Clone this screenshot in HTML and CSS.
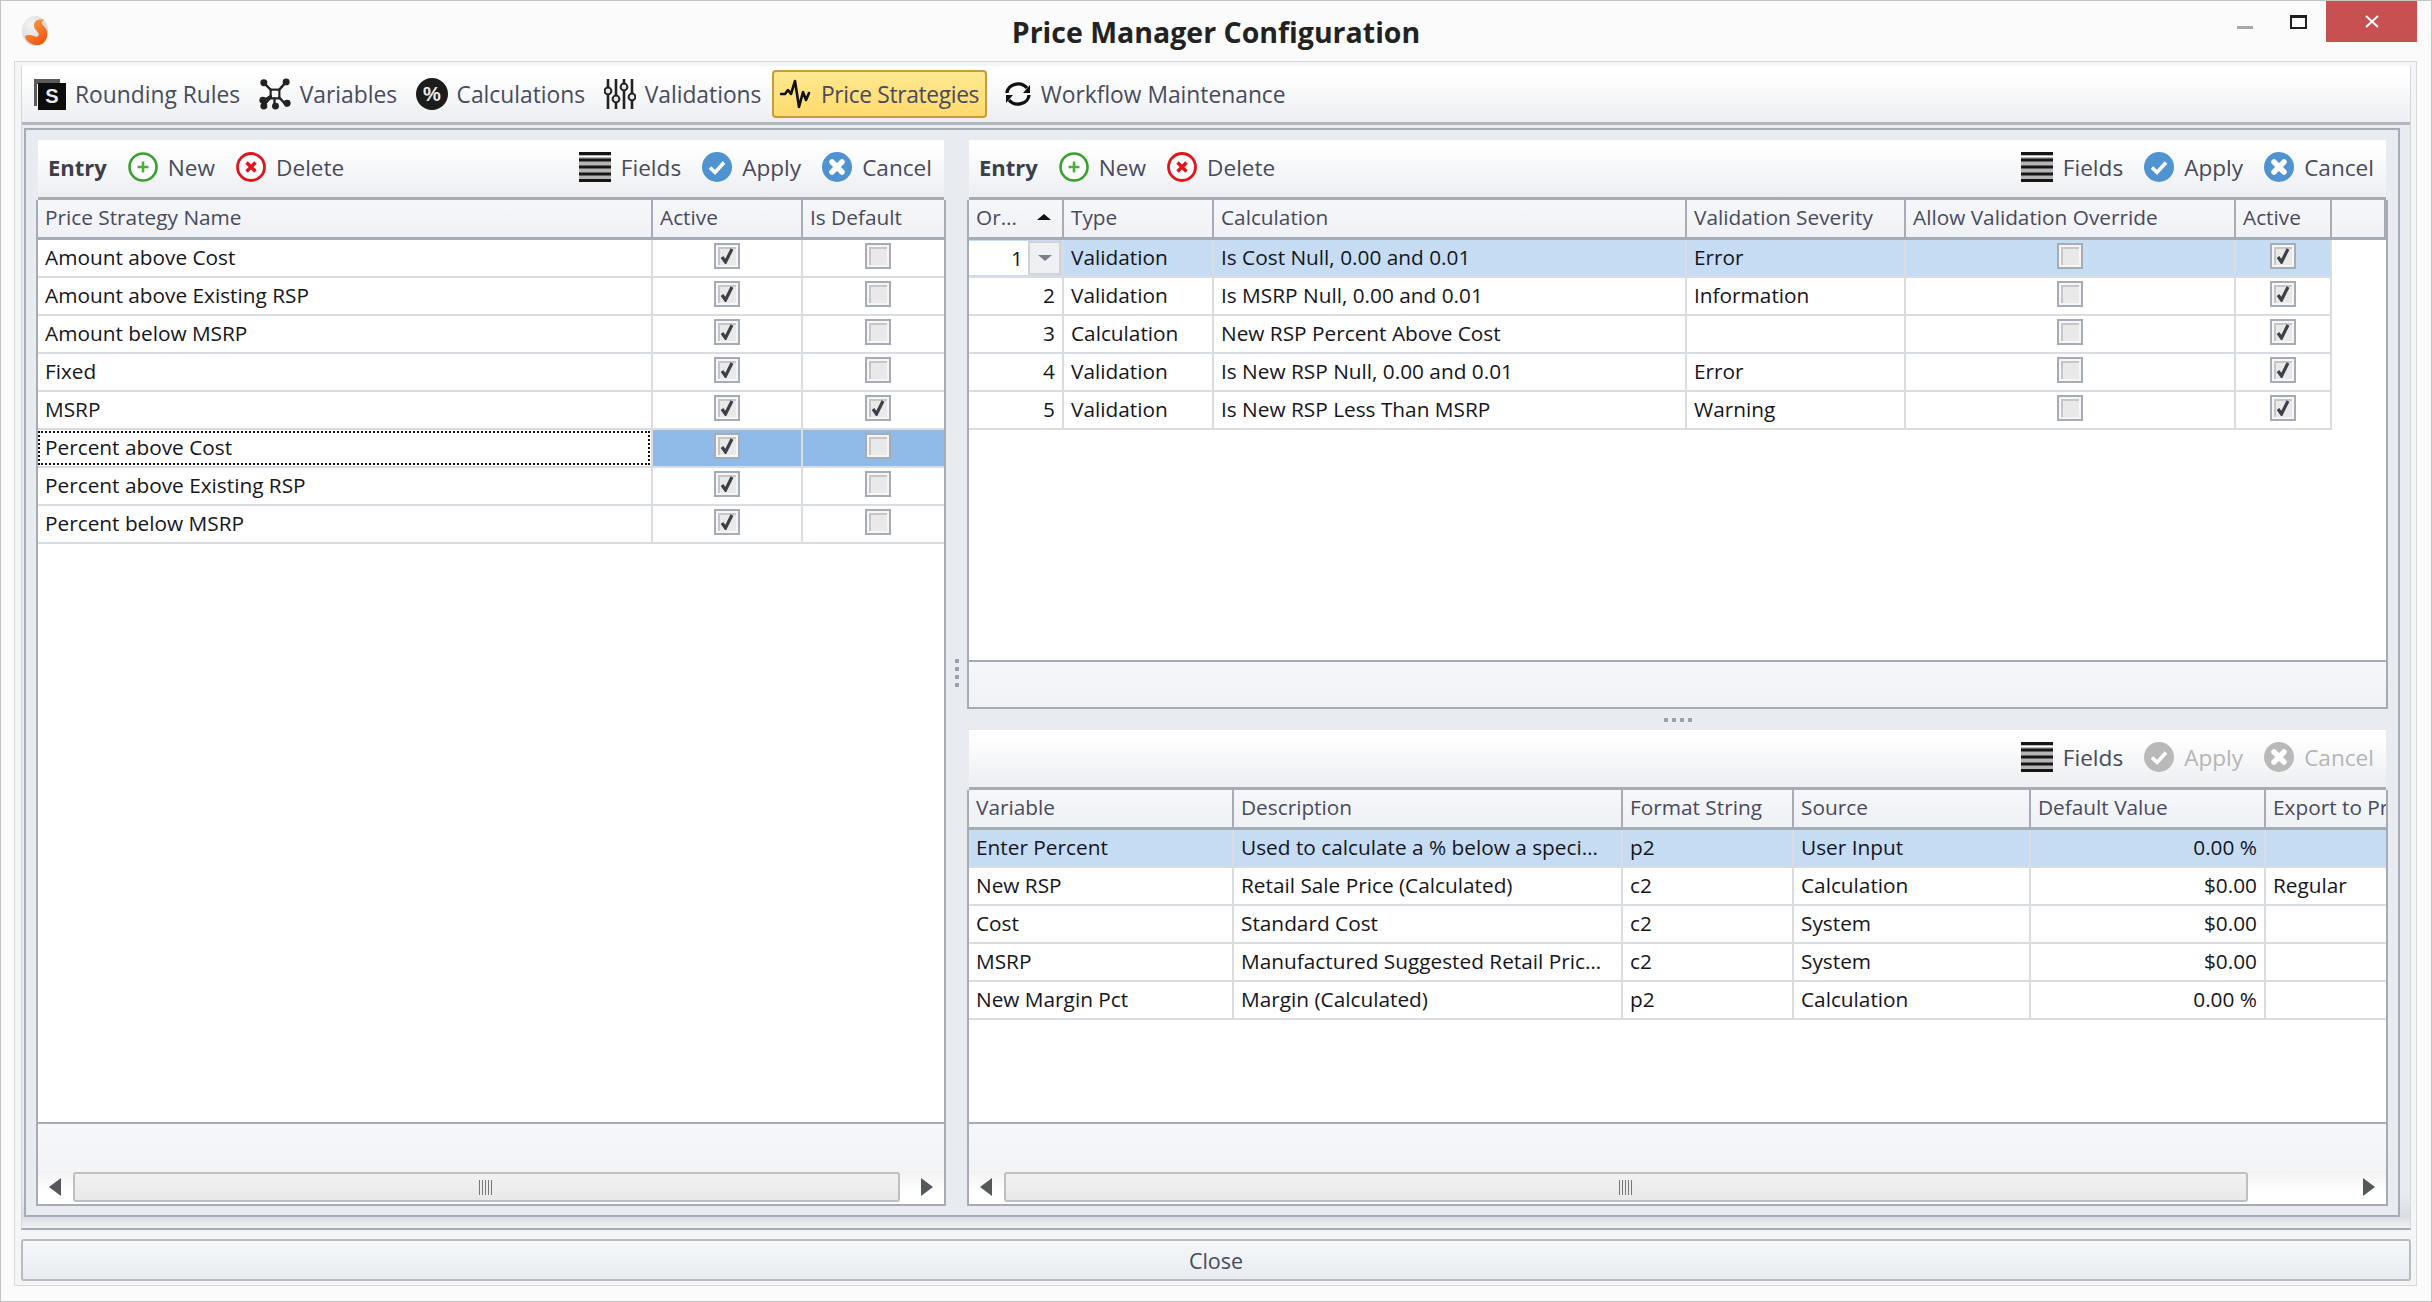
FILE: index.html
```html
<!DOCTYPE html>
<html lang="en">
<head>
    <meta charset="UTF-8">
    <title>Price Manager Configuration</title>
    <link rel="stylesheet" href="styles.css">
</head>
<body>
    <!-- Icon sprite -->
    <svg class="sprite" xmlns="http://www.w3.org/2000/svg">
        <defs>
            <radialGradient id="logo-ball" cx="35%" cy="30%" r="80%">
                <stop offset="0" stop-color="#f4f4f4"/>
                <stop offset="1" stop-color="#cfcfcf"/>
            </radialGradient>
            <linearGradient id="logo-flame" x1="0" y1="0" x2="0.6" y2="1">
                <stop offset="0" stop-color="#f9a04d"/>
                <stop offset="1" stop-color="#ee5a14"/>
            </linearGradient>
        </defs>
        <symbol id="i-logo" viewBox="0 0 32 34">
            <ellipse cx="16" cy="17" rx="14" ry="16" fill="url(#logo-ball)"/>
            <path d="M26 5c-7-1-11 1-11 6 0 5 5 6 5 10 0 2-3 3-6 1-3-1-6-1-9 1 3 6 8 9 14 9 6 0 10-5 10-12 0-6-4-8-6-11 0-2 1-3 3-4z" fill="url(#logo-flame)"/>
        </symbol>
        <symbol id="i-variables" viewBox="0 0 33 33">
            <g stroke="#222" stroke-width="2.4" fill="none">
                <path d="M5 5l8 8M28 4l-8 9M5 23l8-5M4 29l9-10M16 29l0-9M29 29l-9-10"/>
                <rect x="12" y="12" width="9" height="9" stroke-width="2.2"/>
            </g>
            <g fill="#222">
                <circle cx="5" cy="5" r="3.6"/>
                <circle cx="28" cy="4" r="3.6"/>
                <circle cx="4" cy="23" r="3.6"/>
                <circle cx="5" cy="29" r="3.6"/>
                <circle cx="17" cy="29" r="3.6"/>
                <circle cx="29" cy="26" r="3.6"/>
            </g>
        </symbol>
        <symbol id="i-validations" viewBox="0 0 32 32">
            <g stroke="#222" stroke-width="2.6" fill="none">
                <path d="M4 1v30M12 1v30M20 1v30M28 1v30"/>
            </g>
            <g fill="#e8e8e8" stroke="#222" stroke-width="2">
                <circle cx="4" cy="13" r="3.4"/>
                <circle cx="12" cy="21" r="3.4"/>
                <circle cx="20" cy="9" r="3.4"/>
                <circle cx="28" cy="19" r="3.4"/>
            </g>
        </symbol>
        <symbol id="i-wave" viewBox="0 0 32 32">
            <path d="M1 16h4l3-4 3 4 4-13 4 26 4-15 3 8 3-7" fill="none" stroke="#111" stroke-width="2.6" stroke-linejoin="round" stroke-linecap="round"/>
        </symbol>
        <symbol id="i-refresh" viewBox="0 0 28 24">
            <path d="M3 11A11 9.500 0 0 1 23 6" fill="none" stroke="#111" stroke-width="3.400"/>
            <path d="M25 13A11 9.500 0 0 1 5 18" fill="none" stroke="#111" stroke-width="3.400"/>
            <path d="M26 3v8h-7z" fill="#111"/>
            <path d="M2 21v-8h7z" fill="#111"/>
        </symbol>
        <symbol id="i-new" viewBox="0 0 30 30">
            <circle cx="15" cy="15" r="13.500" fill="#fff" stroke="#3aa02f" stroke-width="2.6"/>
            <path d="M15 9.500v11M9.500 15h11" stroke="#4aae3c" stroke-width="2.6"/>
        </symbol>
        <symbol id="i-delete" viewBox="0 0 30 30">
            <circle cx="15" cy="15" r="13.500" fill="#fff" stroke="#e2141c" stroke-width="2.8"/>
            <path d="M10.500 10.500l9 9M19.500 10.500l-9 9" stroke="#e2141c" stroke-width="3.400"/>
        </symbol>
        <symbol id="i-fields" viewBox="0 0 32 30">
            <rect width="32" height="30" fill="#b5b5b5"/>
            <path d="M0 1.500h32M0 8h32M0 15h32M0 22h32M0 28.500h32" stroke="#161616" stroke-width="3"/>
            <path d="M0 4.500h32" stroke="#fff" stroke-width="1"/>
        </symbol>
        <symbol id="i-apply" viewBox="0 0 30 30">
            <circle cx="15" cy="15" r="15" fill="currentColor"/>
            <path d="M8 15.500l5 5 9-10" fill="none" stroke="#fff" stroke-width="3.600"/>
        </symbol>
        <symbol id="i-cancel" viewBox="0 0 30 30">
            <circle cx="15" cy="15" r="15" fill="currentColor"/>
            <path d="M10 10l10 10M20 10L10 20" stroke="#fff" stroke-width="5.500" stroke-linecap="round"/>
        </symbol>
        <symbol id="i-check" viewBox="0 0 14 16">
            <path d="M2 9l3.500 5L12 1" fill="none" stroke="#3d4048" stroke-width="3.200"/>
        </symbol>
    </svg>

    <div class="window">
        <header class="titlebar">
            <svg class="logo"><use href="#i-logo"/></svg>
            <h1 class="title">Price Manager Configuration</h1>
            <div class="window-controls">
                <span class="win-min"></span>
                <span class="win-max"></span>
                <span class="win-close">
                    <svg viewBox="0 0 14 13"><path d="M1 1l12 11M13 1L1 12" stroke="#fff" stroke-width="2"/></svg>
                </span>
            </div>
        </header>

        <div class="shell">
            <div class="tabpage">
                <nav class="tabs">
                    <div class="tab">
                        <svg class="tab-icon" viewBox="0 0 32 32">
                            <path d="M0 1h26v5H3v22H0z" fill="#5a5a5a"/>
                            <rect x="4" y="5" width="28" height="27" fill="#0c0c0c"/>
                            <text x="18" y="25" class="icon-letter">S</text>
                        </svg>
                        Rounding Rules
                    </div>
                    <div class="tab"><svg class="tab-icon"><use href="#i-variables"/></svg>Variables</div>
                    <div class="tab">
                        <svg class="tab-icon" viewBox="0 0 32 32">
                            <circle cx="16" cy="16" r="16" fill="#1c1c1c"/>
                            <text x="16" y="23" class="icon-percent">%</text>
                        </svg>
                        Calculations
                    </div>
                    <div class="tab"><svg class="tab-icon"><use href="#i-validations"/></svg>Validations</div>
                    <div class="tab active"><svg class="tab-icon"><use href="#i-wave"/></svg>Price Strategies</div>
                    <div class="tab"><svg class="tab-icon refresh"><use href="#i-refresh"/></svg>Workflow Maintenance</div>
                </nav>

                <div class="content">
                    <!-- Strategies list -->
                    <section class="pane">
                        <div class="toolbar">
                            <span class="entry">Entry</span>
                            <span class="tool"><svg class="ico"><use href="#i-new"/></svg>New</span>
                            <span class="tool"><svg class="ico"><use href="#i-delete"/></svg>Delete</span>
                            <span class="tool push"><svg class="ico fields"><use href="#i-fields"/></svg>Fields</span>
                            <span class="tool"><svg class="ico"><use href="#i-apply"/></svg>Apply</span>
                            <span class="tool"><svg class="ico"><use href="#i-cancel"/></svg>Cancel</span>
                        </div>
                        <div class="grid-body">
                            <table class="grid strategies">
                                <thead>
                                    <tr><th>Price Strategy Name</th><th>Active</th><th>Is Default</th></tr>
                                </thead>
                                <tbody>
                                    <tr><td>Amount above Cost</td><td class="c"><span class="check"><svg><use href="#i-check"/></svg></span></td><td class="c"><span class="check"></span></td></tr>
                                    <tr><td>Amount above Existing RSP</td><td class="c"><span class="check"><svg><use href="#i-check"/></svg></span></td><td class="c"><span class="check"></span></td></tr>
                                    <tr><td>Amount below MSRP</td><td class="c"><span class="check"><svg><use href="#i-check"/></svg></span></td><td class="c"><span class="check"></span></td></tr>
                                    <tr><td>Fixed</td><td class="c"><span class="check"><svg><use href="#i-check"/></svg></span></td><td class="c"><span class="check"></span></td></tr>
                                    <tr><td>MSRP</td><td class="c"><span class="check"><svg><use href="#i-check"/></svg></span></td><td class="c"><span class="check"><svg><use href="#i-check"/></svg></span></td></tr>
                                    <tr class="picked"><td class="focused"><span class="focus-box">Percent above Cost</span></td><td class="c"><span class="check"><svg><use href="#i-check"/></svg></span></td><td class="c"><span class="check"></span></td></tr>
                                    <tr><td>Percent above Existing RSP</td><td class="c"><span class="check"><svg><use href="#i-check"/></svg></span></td><td class="c"><span class="check"></span></td></tr>
                                    <tr><td>Percent below MSRP</td><td class="c"><span class="check"><svg><use href="#i-check"/></svg></span></td><td class="c"><span class="check"></span></td></tr>
                                </tbody>
                            </table>
                        </div>
                        <div class="grid-foot">
                            <div class="scrollbar">
                                <div class="sb-btn"><span class="arrow-left"></span></div>
                                <div class="sb-thumb"><span class="grip"></span></div>
                                <div class="sb-btn end"><span class="arrow-right"></span></div>
                            </div>
                        </div>
                    </section>

                    <div class="split-v"><i></i><i></i><i></i><i></i></div>

                    <div class="right-col">
                        <!-- Entries of selected strategy -->
                        <section class="pane">
                            <div class="toolbar">
                                <span class="entry">Entry</span>
                                <span class="tool"><svg class="ico"><use href="#i-new"/></svg>New</span>
                                <span class="tool"><svg class="ico"><use href="#i-delete"/></svg>Delete</span>
                                <span class="tool push"><svg class="ico fields"><use href="#i-fields"/></svg>Fields</span>
                                <span class="tool"><svg class="ico"><use href="#i-apply"/></svg>Apply</span>
                                <span class="tool"><svg class="ico"><use href="#i-cancel"/></svg>Cancel</span>
                            </div>
                            <div class="grid-body">
                                <table class="grid entries">
                                    <thead>
                                        <tr><th><span class="sort-head">Or…<span class="sort-up"></span></span></th><th>Type</th><th>Calculation</th><th>Validation Severity</th><th>Allow Validation Override</th><th>Active</th><th></th></tr>
                                    </thead>
                                    <tbody>
                                        <tr class="current"><td class="num"><span class="num-edit">1<span class="drop"></span></span></td><td>Validation</td><td>Is Cost Null, 0.00 and 0.01</td><td>Error</td><td class="c"><span class="check"></span></td><td class="c"><span class="check"><svg><use href="#i-check"/></svg></span></td><td class="blank"></td></tr>
                                        <tr><td class="num">2</td><td>Validation</td><td>Is MSRP Null, 0.00 and 0.01</td><td>Information</td><td class="c"><span class="check"></span></td><td class="c"><span class="check"><svg><use href="#i-check"/></svg></span></td><td class="blank"></td></tr>
                                        <tr><td class="num">3</td><td>Calculation</td><td>New RSP Percent Above Cost</td><td></td><td class="c"><span class="check"></span></td><td class="c"><span class="check"><svg><use href="#i-check"/></svg></span></td><td class="blank"></td></tr>
                                        <tr><td class="num">4</td><td>Validation</td><td>Is New RSP Null, 0.00 and 0.01</td><td>Error</td><td class="c"><span class="check"></span></td><td class="c"><span class="check"><svg><use href="#i-check"/></svg></span></td><td class="blank"></td></tr>
                                        <tr><td class="num">5</td><td>Validation</td><td>Is New RSP Less Than MSRP</td><td>Warning</td><td class="c"><span class="check"></span></td><td class="c"><span class="check"><svg><use href="#i-check"/></svg></span></td><td class="blank"></td></tr>
                                    </tbody>
                                </table>
                            </div>
                            <div class="grid-foot short"></div>
                        </section>

                        <div class="split-h"><i></i><i></i><i></i><i></i></div>

                        <!-- Variables of selected strategy -->
                        <section class="pane">
                            <div class="toolbar">
                                <span class="tool push"><svg class="ico fields"><use href="#i-fields"/></svg>Fields</span>
                                <span class="tool off"><svg class="ico"><use href="#i-apply"/></svg>Apply</span>
                                <span class="tool off"><svg class="ico"><use href="#i-cancel"/></svg>Cancel</span>
                            </div>
                            <div class="grid-body">
                                <table class="grid vars">
                                    <thead>
                                        <tr><th>Variable</th><th>Description</th><th>Format String</th><th>Source</th><th>Default Value</th><th>Export to Price File</th></tr>
                                    </thead>
                                    <tbody>
                                        <tr class="current"><td>Enter Percent</td><td>Used to calculate a % below a speci…</td><td>p2</td><td>User Input</td><td class="r">0.00 %</td><td></td></tr>
                                        <tr><td>New RSP</td><td>Retail Sale Price (Calculated)</td><td>c2</td><td>Calculation</td><td class="r">$0.00</td><td>Regular</td></tr>
                                        <tr><td>Cost</td><td>Standard Cost</td><td>c2</td><td>System</td><td class="r">$0.00</td><td></td></tr>
                                        <tr><td>MSRP</td><td>Manufactured Suggested Retail Pric…</td><td>c2</td><td>System</td><td class="r">$0.00</td><td></td></tr>
                                        <tr><td>New Margin Pct</td><td>Margin (Calculated)</td><td>p2</td><td>Calculation</td><td class="r">0.00 %</td><td></td></tr>
                                    </tbody>
                                </table>
                            </div>
                            <div class="grid-foot">
                                <div class="scrollbar wide">
                                    <div class="sb-btn"><span class="arrow-left"></span></div>
                                    <div class="sb-thumb"><span class="grip"></span></div>
                                    <div class="sb-btn end"><span class="arrow-right"></span></div>
                                </div>
                            </div>
                        </section>
                    </div>
                </div>
            </div>

            <button class="close-btn">Close</button>
        </div>
    </div>
</body>
</html>
```

FILE: styles.css
```css
:root {
    --line: #a6acb5;
    --cell-line: #d9dde2;
    --panel: #e8ebf0;
    --text: #484b5c;
}

* {
    margin: 0;
    padding: 0;
    box-sizing: border-box;
}

body {
    font-family: "Open Sans", "Liberation Sans", sans-serif;
    font-size: 20.800px;
    color: var(--text);
    background: #fbfbfb;
}

.sprite {
    position: absolute;
    width: 0;
    height: 0;
}

.icon-letter {
    font: bold 20px "Liberation Sans", sans-serif;
    fill: #e8e8e8;
    text-anchor: middle;
}

.icon-percent {
    font: bold 20px "Liberation Sans", sans-serif;
    fill: #eee;
    text-anchor: middle;
}

.window {
    width: 2432px;
    height: 1302px;
    display: flex;
    flex-direction: column;
    border: 1px solid #c2c4c6;
    background: #fbfbfb;
    overflow: hidden;
}

.titlebar {
    height: 60px;
    flex: none;
    display: grid;
    grid-template-columns: 1fr auto 1fr;
    align-items: start;
}

.logo {
    width: 30px;
    height: 32px;
    margin: 14px 0 0 19px;
}

.title {
    font-size: 28.500px;
    font-weight: 700;
    color: #222;
    line-height: 62px;
}

.window-controls {
    justify-self: end;
    display: flex;
    align-items: flex-start;
    margin-right: 14px;
}

.win-min {
    width: 16px;
    height: 3px;
    margin: 25px 37px 0 0;
    background: #a8a8a8;
}

.win-max {
    width: 17px;
    height: 14px;
    margin: 14px 19px 0 0;
    border: 2px solid #1e1e1e;
    border-top-width: 3px;
}

.win-close {
    width: 91px;
    height: 41px;
    background: #c75050;
    display: flex;
    align-items: center;
    justify-content: center;
}

.win-close svg {
    width: 14px;
    height: 13px;
}

.shell {
    flex: none;
    height: 1225px;
    margin: 0 14px 0 13px;
    padding: 4px 5px 4px 6px;
    display: flex;
    flex-direction: column;
    gap: 9px;
    border: 1px solid #d5d8dc;
    background: #f3f5f7;
}

.tabpage {
    flex: 1;
    min-height: 0;
    display: flex;
    flex-direction: column;
    padding: 0 10px 11px 0;
    border-left: 1px solid #d3d6db;
    border-right: 1px solid #d3d6db;
    border-bottom: 2px solid var(--line);
    background: linear-gradient(to bottom, var(--panel) 97%, #d9dce1 99%, #f1f3f6);
}

.tabs {
    height: 59px;
    flex: none;
    margin-right: -10px;
    padding: 4px 0 0 4px;
    display: flex;
    align-items: flex-start;
    gap: 2.500px;
    font-size: 22.800px;
    border-bottom: 3px solid #b3b7bd;
    background: linear-gradient(to bottom, #fff 15%, #eceef2);
}

.tab {
    height: 48px;
    padding: 0 7px;
    display: flex;
    align-items: center;
    gap: 9px;
    border: 1px solid transparent;
    border-radius: 4px;
    white-space: nowrap;
}

.tab.active {
    margin-right: 6px;
    border: 2px solid #c89b3c;
    padding: 0 6px;
    letter-spacing: -0.350px;
    background: linear-gradient(to bottom, #ffe88f, #ffdb6e);
}

.tab-icon {
    width: 32px;
    height: 32px;
}

.tab-icon.refresh {
    width: 28px;
    height: 24px;
}

.content {
    flex: 1;
    min-height: 0;
    margin: 3px 0 0 2px;
    padding: 10px 10px 9px;
    display: grid;
    grid-template-columns: 910px 21px 1fr;
    border: 2px solid var(--line);
    background: var(--panel);
}

.right-col {
    min-height: 0;
    display: grid;
    grid-template-rows: 569px 21px 1fr;
}

.split-v,
.split-h {
    display: flex;
    align-items: center;
    justify-content: center;
    gap: 4px;
}

.split-v {
    flex-direction: column;
}

.split-v i,
.split-h i {
    width: 4px;
    height: 4px;
    background: #98a1ac;
}

.pane {
    min-height: 0;
    min-width: 0;
    display: flex;
    flex-direction: column;
}

.toolbar {
    height: 60px;
    flex: none;
    margin: 0 2px;
    padding: 0 12px 3px 10px;
    display: flex;
    align-items: center;
    gap: 21px;
    font-size: 22.600px;
    border-bottom: 3px solid var(--line);
    background: linear-gradient(to bottom, #fff 10%, #eceef2);
}

.entry {
    font-weight: 700;
    font-size: 22px;
    color: #3c3e4a;
}

.tool {
    display: flex;
    align-items: center;
    gap: 10px;
}

.tool.push {
    margin-left: auto;
}

.tool.off {
    color: #b5b5b5;
}

.ico {
    width: 30px;
    height: 30px;
    color: #4f93d1;
}

.ico.fields {
    width: 32px;
}

.tool.off .ico {
    color: #b9b9b9;
}

.grid-body {
    flex: 1;
    min-height: 0;
    overflow: hidden;
    border-left: 2px solid var(--line);
    border-right: 2px solid var(--line);
    background: #fff;
}

.grid {
    table-layout: fixed;
    border-collapse: separate;
    border-spacing: 0;
}

.strategies { width: 917px; }
.entries { width: 1417px; }
.vars { width: 1497px; }

.grid th {
    height: 40px;
    padding: 0 7px 3px;
    font-weight: 400;
    text-align: left;
    white-space: nowrap;
    overflow: hidden;
    border-right: 2px solid var(--line);
    border-bottom: 3px solid var(--line);
    background: linear-gradient(to bottom, #f6f7fa, #eff1f5);
}

.grid td {
    height: 38px;
    padding: 0 7px 2px;
    line-height: 30px;
    color: #15151c;
    white-space: nowrap;
    overflow: hidden;
    border-right: 2px solid var(--cell-line);
    border-bottom: 2px solid var(--cell-line);
}

.strategies th:nth-child(1) { width: 615px; }
.strategies th:nth-child(2) { width: 150px; }
.strategies th:nth-child(3) { width: 152px; }

.entries th:nth-child(1) { width: 95px; }
.entries th:nth-child(2) { width: 150px; }
.entries th:nth-child(3) { width: 473px; }
.entries th:nth-child(4) { width: 219px; }
.entries th:nth-child(5) { width: 330px; }
.entries th:nth-child(6) { width: 96px; }
.entries th:nth-child(7) { width: 54px; }

.vars th:nth-child(1) { width: 265px; }
.vars th:nth-child(2) { width: 389px; }
.vars th:nth-child(3) { width: 171px; }
.vars th:nth-child(4) { width: 237px; }
.vars th:nth-child(5) { width: 235px; }
.vars th:nth-child(6) { width: 200px; }

.grid td.c {
    padding: 0;
    text-align: center;
}

.grid td.r,
.grid td.num {
    text-align: right;
}

.grid td.blank {
    border: none;
    background: #fff;
}

.grid tr.current td {
    background: #c5dcf3;
}

.grid tr.current td.blank {
    background: #fff;
}

.grid tr.picked td {
    background: #90bbe9;
}

.grid tr.picked td.focused {
    padding: 0 1px 0 0;
    background: #fff;
}

.focus-box {
    display: block;
    height: 34px;
    line-height: 28px;
    padding-left: 5px;
    border: 2px dotted #111;
}

.check {
    width: 26px;
    height: 26px;
    display: inline-flex;
    align-items: center;
    justify-content: center;
    vertical-align: middle;
    margin-bottom: 5px;
    border: 2px solid var(--line);
    background: #e9e9e9;
    box-shadow: inset 0 0 0 2px #f6f6f6, inset 4px 4px 0 0 #c6c6c6;
}

.check svg {
    width: 14px;
    height: 16px;
}

.sort-head {
    display: flex;
    align-items: center;
    justify-content: space-between;
    padding-right: 4px;
}

.sort-up {
    width: 0;
    height: 0;
    border-left: 7px solid transparent;
    border-right: 7px solid transparent;
    border-bottom: 6px solid #111;
}

.grid tr.current td.num {
    padding: 0 1px 0 0;
}

.num-edit {
    display: flex;
    align-items: center;
    justify-content: flex-end;
    gap: 5px;
    height: 34px;
    background: #fff;
}

.drop {
    width: 33px;
    height: 34px;
    display: flex;
    align-items: center;
    justify-content: center;
    border: 2px solid #d0d3d8;
    background: #eef0f2;
}

.drop::after {
    content: "";
    border-left: 7px solid transparent;
    border-right: 7px solid transparent;
    border-top: 6px solid #7c7f85;
}

.grid-foot {
    height: 84px;
    flex: none;
    display: flex;
    flex-direction: column;
    justify-content: flex-end;
    border: 2px solid var(--line);
    background: linear-gradient(to bottom, #f5f7fa, #f0f2f5);
}

.grid-foot.short {
    height: 49px;
}

.scrollbar {
    height: 34px;
    display: flex;
    align-items: stretch;
    background: linear-gradient(to bottom, #f2f2f2, #fff 70%);
}

.sb-btn {
    width: 35px;
    flex: none;
    display: flex;
    align-items: center;
    padding: 0 11px;
}

.sb-btn.end {
    width: 44px;
    justify-content: flex-end;
}

.wide .sb-btn.end {
    width: 138px;
}

.arrow-left,
.arrow-right {
    width: 0;
    height: 0;
    border-top: 9px solid transparent;
    border-bottom: 9px solid transparent;
}

.arrow-left {
    border-right: 12px solid #55585c;
}

.arrow-right {
    border-left: 12px solid #55585c;
}

.sb-thumb {
    flex: 1;
    margin: 2px 0;
    display: flex;
    align-items: center;
    justify-content: center;
    border: 2px solid #bcc0c5;
    border-radius: 3px;
    background: linear-gradient(to bottom, #f1f2f0, #e7e8e8);
}

.grip {
    width: 15px;
    height: 15px;
    background: repeating-linear-gradient(to right, #777 0 1px, #ececec 1px 3px);
}

.close-btn {
    height: 42px;
    flex: none;
    font: inherit;
    font-size: 21.500px;
    color: var(--text);
    border: 2px solid #b8bcc2;
    border-radius: 3px;
    background: linear-gradient(to bottom, #f5f8fb, #e8ebef);
}
```
